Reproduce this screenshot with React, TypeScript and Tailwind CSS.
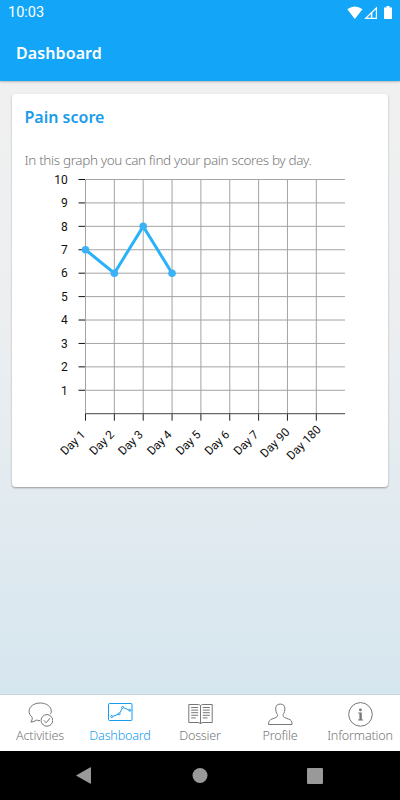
import React from 'react';

const days = ['Day 1', 'Day 2', 'Day 3', 'Day 4', 'Day 5', 'Day 6', 'Day 7', 'Day 90', 'Day 180'];
const scores = [7, 6, 8, 6];
const left = 73.5;
const top = 9.5;
const stepX = 28.85;
const stepY = 23.42;
const bottom = top + stepY * 10;
const px = (i: number) => left + stepX * i;
const py = (v: number) => bottom - stepY * v;

// Longer labels reach further up along their slanted baseline.
const labelShift = (day: string) => (day.length - 5) * 3.4;

function PainChart() {
  return (
    <svg width="376" height="310" viewBox="0 0 376 310" className="block font-['Roboto',sans-serif] text-[12px]">
      {Array.from({ length: 10 }, (_, i) => i + 1).map((v) => (
        <g key={v}>
          <path d={`M${left} ${py(v)}H333`} stroke="#a3a3a3" />
          <path d={`M66.5 ${py(v)}H73`} stroke="#111" />
          <text x="55.7" y={py(v) + 4.3} textAnchor="end" fill="#111">{v}</text>
        </g>
      ))}
      {days.map((day, i) => (
        <g key={day}>
          <path d={`M${px(i)} ${top}V${bottom}`} stroke="#a3a3a3" />
          <path d={`M${px(i)} ${bottom}v7`} stroke="#222" />
          <text
            transform={`translate(${px(i) + 0.5} ${bottom + 21.5}) rotate(-45)`}
            x={labelShift(day)}
            textAnchor="end"
            fill="#111"
            className="text-[11.8px]"
          >
            {day}
          </text>
        </g>
      ))}
      <path d={`M${left} ${bottom}H333`} stroke="#444" />
      <polyline points={scores.map((s, i) => `${px(i)},${py(s)}`).join(' ')} fill="none" stroke="#29b1fa" strokeWidth="3" />
      {scores.map((s, i) => (
        <circle key={i} cx={px(i)} cy={py(s)} r="3.8" fill="#3bb2f5" />
      ))}
    </svg>
  );
}

function ActivitiesIcon() {
  return (
    <>
      <path d="M12 18.6 C10.6 18.6 9.6 18.4 8.6 18 Q6.3 20 2.8 20.1 Q4.6 18.2 4.2 15.3 C1.9 13.4 1.1 11.4 1.1 9.2 C1.1 4.5 6 1 12.2 1 C18.5 1 23.3 4.6 23.3 9 Q23.3 10.8 22.5 12" />
      <circle cx="18.9" cy="18.4" r="5.8" />
      <path d="M15.9 18.3l2.3 2.5 3.8-4.7" />
    </>
  );
}

function DashboardIcon() {
  return (
    <>
      <rect x=".5" y="1.5" width="23.5" height="17" rx="1" />
      <path d="M4.8 14.3l5.8-2.1M12 10.7l2.2-4.3M16 5.9l4.8 2.1" />
      <circle cx="3.7" cy="14.6" r="1" />
      <circle cx="11.2" cy="11.8" r="1" />
      <circle cx="14.6" cy="5.4" r="1" />
      <circle cx="21.8" cy="8.3" r="1" />
    </>
  );
}

function DossierIcon() {
  return (
    <>
      <path d="M12.5 3.7Q11.9 2.5 10.4 2.5H.8V20.5H10Q12.1 20.5 12.5 22Q12.9 20.5 15 20.5H24.2V2.5H14.6Q13.1 2.5 12.5 3.7V22" />
      <path d="M3.2 5.5h7M3.2 8.1h7M3.2 10.7h7M3.2 13.3h7M3.2 15.9h4.6M14.8 5.5h7M14.8 8.1h7M14.8 10.7h7M14.8 13.3h7M14.8 15.9h4.6" />
    </>
  );
}

function ProfileIcon() {
  return (
    <path d="M.5 22.5 C.5 19.2 1.5 18 4.1 17 C7.3 15.7 9.6 15.4 9.6 13.3 Q9.6 12.4 8.8 11.4 Q7.8 9.9 7.7 6.9 C7.6 3.6 9.2 2.1 12.3 2.1 S17 3.6 16.9 6.9 Q16.8 9.9 15.8 11.4 Q15 12.4 15 13.3 C15 15.4 17.3 15.7 20.5 17 C23.1 18 24.1 19.2 24.1 22.5Z" />
  );
}

function InformationIcon() {
  return (
    <>
      <circle cx="12.5" cy="12.4" r="11.8" />
      <circle cx="12.4" cy="7.9" r="1.4" fill="currentColor" stroke="none" />
      <path d="M10.2 10.6h3.6v6.8h1.3v1H10v-1h1.4v-5.8h-1.2z" fill="currentColor" stroke="none" />
    </>
  );
}

const tabs = [
  { label: 'Activities', Icon: ActivitiesIcon },
  { label: 'Dashboard', Icon: DashboardIcon },
  { label: 'Dossier', Icon: DossierIcon },
  { label: 'Profile', Icon: ProfileIcon },
  { label: 'Information', Icon: InformationIcon },
];

export default function App() {
  return (
    <div className="flex h-[800px] w-[400px] flex-col overflow-hidden font-['Noto_Sans','Open_Sans',sans-serif]">
      <header className="z-10 h-[81px] shrink-0 bg-[#13a6f8] text-white shadow-[0_1px_2px_rgba(0,0,0,0.25)]">
        <div className="flex h-[26px] items-center justify-between pl-[8px] pr-[7px] font-['Roboto',sans-serif]">
          <span className="text-[14.5px] leading-[26px]">10:03</span>
          <svg width="46" height="16" viewBox="0 0 46 16" fill="#fff">
            <path d="M.3 4.3Q7.8-1.5 15.5 4.3L7.8 14Z" />
            <path d="M29.4 3V13.4H18.6Z" fill="none" stroke="#fff" strokeWidth="1.2" />
            <path d="M24.6 7.4V13.4" stroke="#fff" strokeWidth="1.5" />
            <path d="M39.4 1h3.2v1.4H45V13.3q0 .7-.7.7h-6.6q-.7 0-.7-.7V2.4h2.4z" />
          </svg>
        </div>
        <h1 className="pl-4 text-[16px] font-semibold leading-[55px] tracking-[0.1px]">Dashboard</h1>
      </header>
      <main className="flex-1 bg-linear-to-b from-[#f0f0f0] via-[#ebeef0] via-45% to-[#d6e6ef] px-3 pt-[13px]">
        <section className="h-[393px] overflow-hidden rounded-[4px] bg-white shadow-[0_1px_2px_rgba(0,0,0,0.35)]">
          <h2 className="h-[54px] pl-[12.5px] pt-[11px] text-[16px] font-semibold leading-[24px] text-[#199cea]">Pain score</h2>
          <p className="h-[22px] whitespace-nowrap pl-[12.5px] text-[13.5px] font-light leading-[24px] tracking-[-0.37px] text-[#777]">In this graph you can find your pain scores by day.</p>
          <PainChart />
        </section>
      </main>
      <nav className="grid h-[57px] shrink-0 grid-cols-5 border-t border-[#c9d6dd] bg-white">
        {tabs.map(({ label, Icon }) => (
          <div key={label} className={`flex flex-col items-center pt-[7px] ${label === 'Dashboard' ? 'text-[#159cf0]' : 'text-[#777]'}`}>
            <svg width="25" height="26" viewBox="0 0 25 26" fill="none" stroke="currentColor" strokeWidth="1">
              <Icon />
            </svg>
            <span className="text-[12.6px] font-light leading-[16px] tracking-[-0.2px]">{label}</span>
          </div>
        ))}
      </nav>
      <footer className="flex h-[49px] shrink-0 justify-center bg-black">
        <svg width="400" height="49" viewBox="0 0 400 49" fill="#999">
          <path d="M76 24.5L90 16.5q1-.5 1 .5V32q0 1-1 .5Z" />
          <circle cx="200" cy="24.5" r="7.5" />
          <rect x="307" y="17" width="16" height="16" rx="1" />
        </svg>
      </footer>
    </div>
  );
}
